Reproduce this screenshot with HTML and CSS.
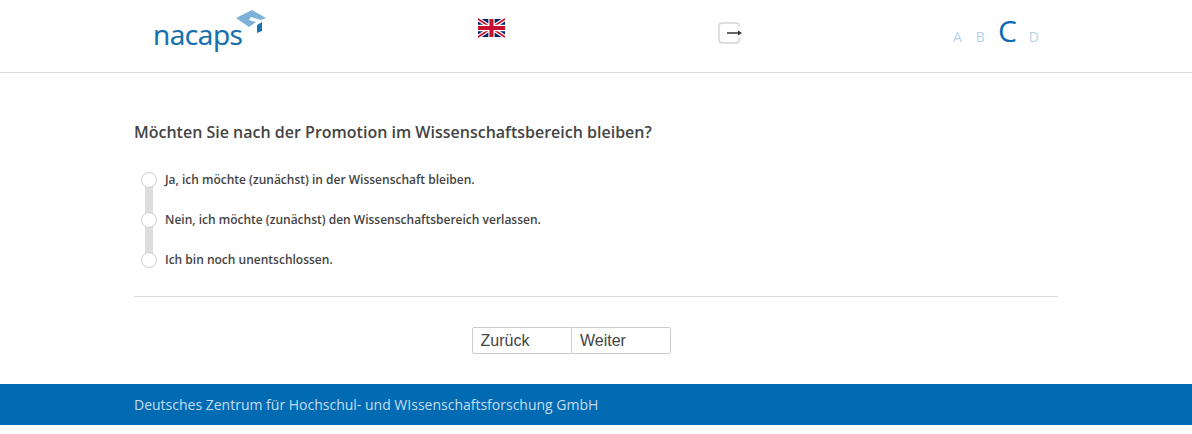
FILE: index.html
```html
<!DOCTYPE html>
<html lang="de">
<head>
<meta charset="utf-8">
<title>nacaps</title>
<link rel="stylesheet" href="styles.css">
</head>
<body>
<header class="header">
  <div class="logo">
    <span class="logo-text">nacaps</span>
    <svg class="logo-cap" width="30" height="24" viewBox="0 0 30 24">
      <path d="M0 8 L16 0 L30 8 L25 10 L15 7 L13 10 L20 12 L13 17 Z" fill="#7cb2da"/>
      <path d="M21 15 L26 12 L26 21 L21 23 Z" fill="#1b75b4"/>
    </svg>
  </div>
  <div class="flag-cell">
    <svg class="flag" width="27" height="20" viewBox="0 0 60 40">
      <rect width="60" height="40" fill="#012169"/>
      <path d="M0 0 L60 40 M60 0 L0 40" stroke="#fff" stroke-width="9"/>
      <path d="M0 0 L60 40 M60 0 L0 40" stroke="#c8102e" stroke-width="4"/>
      <path d="M30 0 V40 M0 20 H60" stroke="#fff" stroke-width="14"/>
      <path d="M30 0 V40 M0 20 H60" stroke="#c8102e" stroke-width="9"/>
    </svg>
  </div>
  <div class="exit-cell">
    <svg width="24" height="22" viewBox="0 0 24 22">
      <path d="M21.5 4.5 V4.5 Q21.5 1 18 1 H4.5 Q1 1 1 4.5 V17.5 Q1 21 4.5 21 H18 Q21.5 21 21.5 17.5 V16" fill="none" stroke="#d4d4d4" stroke-width="1.5"/>
      <path d="M9 11 H21" stroke="#333" stroke-width="1.5"/>
      <path d="M20 8.5 L24 11 L20 13.5 Z" fill="#333"/>
    </svg>
  </div>
  <div class="steps">
    <span class="step">A</span>
    <span class="step">B</span>
    <span class="step step-current">C</span>
    <span class="step">D</span>
  </div>
</header>
<main class="main">
  <h1 class="question">Möchten Sie nach der Promotion im Wissenschaftsbereich bleiben?</h1>
  <div class="options">
    <div class="option"><span class="radio"></span><span class="label">Ja, ich möchte (zunächst) in der Wissenschaft bleiben.</span></div>
    <div class="option"><span class="radio"></span><span class="label">Nein, ich möchte (zunächst) den Wissenschaftsbereich verlassen.</span></div>
    <div class="option"><span class="radio"></span><span class="label">Ich bin noch unentschlossen.</span></div>
  </div>
  <hr class="rule">
  <div class="nav">
    <button class="btn btn-left" type="button">Zurück</button><button class="btn btn-right" type="button">Weiter</button>
  </div>
</main>
<footer class="footer">Deutsches Zentrum für Hochschul- und WIssenschaftsforschung GmbH</footer>
</body>
</html>
```

FILE: styles.css
```css
* { box-sizing: border-box; }
html, body { margin: 0; padding: 0; background: #fff; }
body { font-family: "Open Sans", sans-serif; color: #444; height: 434px; overflow: hidden; }

.header {
  height: 73px;
  border-bottom: 1px solid #ddd;
  display: flex;
  align-items: flex-start;
  padding-left: 153px;
}
.logo { width: 325px; height: 72px; display: flex; align-items: flex-start; }
.logo-text {
  font-size: 28px;
  line-height: 40px;
  margin-top: 14px;
  color: #126fb0;
  letter-spacing: -0.45px;
  -webkit-text-stroke: 0.2px #126fb0;
}
.logo-cap { margin-top: 10px; margin-left: -6px; }

.flag-cell { width: 240px; padding-top: 18px; line-height: 0; }
.exit-cell { width: 235px; padding-top: 22px; line-height: 0; }

.steps { display: flex; align-items: baseline; color: #b5d4ec; font-size: 14px; line-height: 40px; margin-top: 11px; }
.step { margin-right: 14px; }
.step-current { font-size: 30px; color: #0a6cb5; margin-right: 12px; margin-left: -1px; }

.main { width: 924px; margin-left: 134px; }
.question {
  margin: 48px 0 0;
  font-size: 16px;
  line-height: 22px;
  font-weight: 600;
  color: #444;
}
.options {
  margin-top: 29px;
  padding-left: 7px;
  display: flex;
  flex-direction: column;
  gap: 24px;
  background: linear-gradient(#ddd, #ddd) no-repeat 11px 10px / 8px 80px;
}
.option { display: flex; align-items: center; height: 16px; }
.radio {
  width: 16px;
  height: 16px;
  border-radius: 50%;
  border: 1px solid #ccc;
  background: #fff;
  flex: none;
}
.label { font-size: 12px; font-weight: 600; margin-left: 8px; line-height: 16px; color: #444; }

.rule { border: 0; border-top: 1px solid #ddd; margin: 28px 0 0; }
.nav { display: flex; justify-content: center; margin-top: 30px; padding-right: 50px; }
.btn {
  width: 100px;
  height: 27px;
  font-family: "Liberation Sans", Arial, sans-serif;
  font-size: 16px;
  color: #444;
  background: #fff;
  border: 1px solid #ccc;
  text-align: left;
  padding: 0 8px;
  line-height: 25px;
}
.btn-left { border-radius: 2px 0 0 2px; }
.btn-right { border-left: 0; border-radius: 0 2px 2px 0; width: 99px; padding-left: 8.5px; }

.footer {
  margin-top: 30px;
  height: 41px;
  background: #006bb3;
  color: #c5dcee;
  font-size: 14px;
  line-height: 41px;
  padding-left: 134px;
}
```
